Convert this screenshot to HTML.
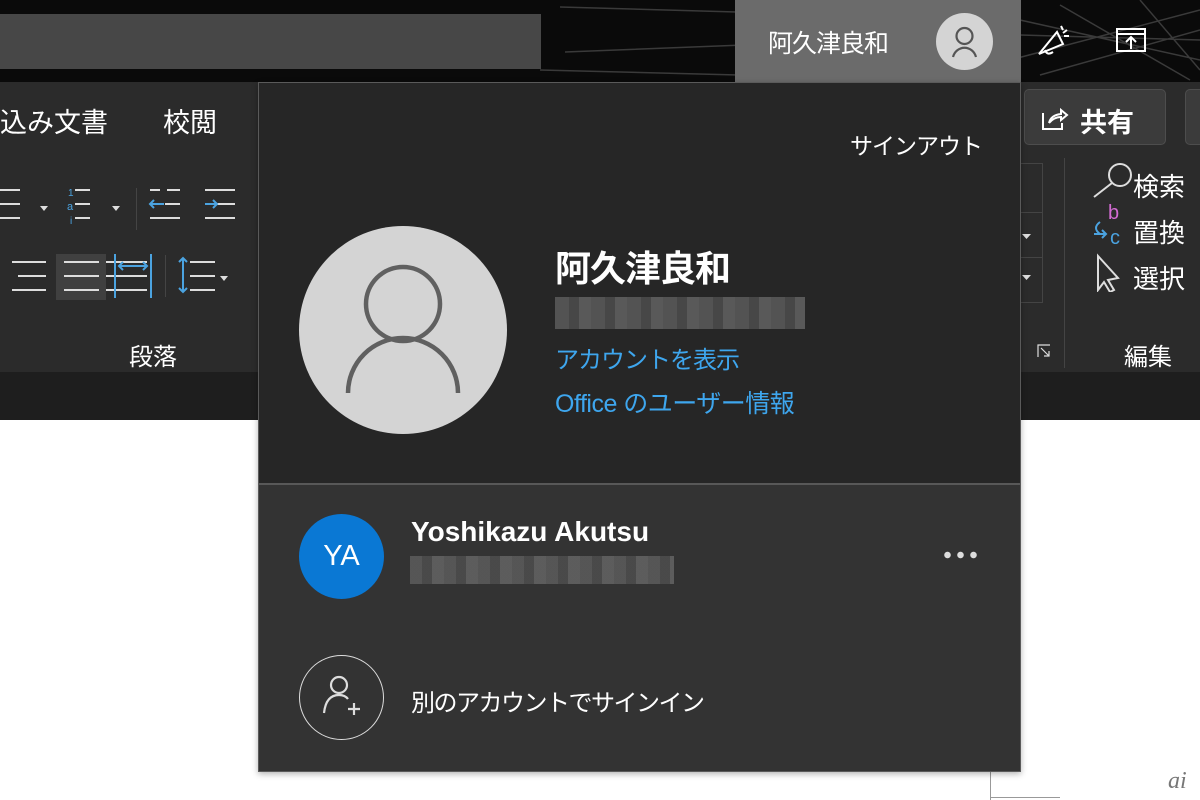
<!DOCTYPE html>
<html><head><meta charset="utf-8">
<style>
*{margin:0;padding:0;box-sizing:border-box}
body{width:1200px;height:800px;overflow:hidden;background:#fff;position:relative;font-family:"Liberation Sans","Noto Sans CJK JP",sans-serif;color:#fff}
.a{position:absolute}
.t{font-size:26px;white-space:nowrap}
</style></head><body>
<div class="a" style="left:0;top:0;width:1200px;height:82px;background:#0a0a0a"></div>
<svg class="a" style="left:540px;top:0" width="660" height="82"><g stroke="#3a3a3a" stroke-width="1.5" fill="none">
<path d="M20 7 L300 15 M25 52 L330 40 M0 70 L320 78 M480 20 L660 60 M470 60 L660 10 M480 35 L660 40 M500 75 L660 30 M520 5 L650 80 M600 0 L660 70"/></g></svg>
<div class="a" style="left:0;top:14px;width:541px;height:55px;background:#474747"></div>
<div class="a" style="left:735px;top:0;width:286px;height:82px;background:#6b6b6b"></div>
<div class="a t" style="left:768px;top:24px;font-size:25px;letter-spacing:-1px">阿久津良和</div>
<div class="a" style="left:936px;top:13px;width:57px;height:57px;border-radius:50%;background:#d4d4d4"></div>
<svg class="a" style="left:936px;top:13px" width="57" height="57"><g stroke="#555" stroke-width="2.2" fill="none"><circle cx="28.5" cy="23" r="8"/><path d="M17 44 A12 13 0 0 1 40 44"/></g></svg>
<svg class="a" style="left:1035px;top:22px" width="40" height="40"><g stroke="#fff" stroke-width="2" fill="none"><path d="M4 32 L22 10 L28 22 Z M10 28 q2 6 8 2 M26 4 l2 4 M32 8 l-4 3 M34 14 l-5 0"/></g></svg>
<svg class="a" style="left:1115px;top:27px" width="34" height="28"><g stroke="#fff" stroke-width="2" fill="none"><rect x="2" y="2" width="28" height="22"/><path d="M2 7 H30 M16 22 V11 M11 15 L16 10 L21 15"/></g></svg>
<!-- ribbon -->
<div class="a" style="left:0;top:82px;width:1200px;height:290px;background:#2b2b2b"></div>
<div class="a" style="left:0;top:372px;width:1200px;height:48px;background:#1e1e1e"></div>
<div class="a t" style="left:0;top:101px;font-size:27px">込み文書</div>
<div class="a t" style="left:163px;top:101px;font-size:27px">校閲</div>
<svg class="a" style="left:0;top:180px" width="250" height="130"><g stroke="#ddd" stroke-width="2" fill="none">
<path d="M0 10 H20 M0 24 H20 M0 38 H20 M75 10 H90 M75 24 H90 M75 38 H90 M150 10 H160 M167 10 H180 M165 24 H180 M150 38 H180 M205 10 H235 M215 24 H235 M205 38 H235"/>
<path d="M12 82 H46 M18 96 H46 M12 110 H46 M105 82 H147 M105 96 H147 M105 110 H147 M190 82 H215 M190 96 H215 M190 110 H215"/></g>
<rect x="56" y="74" width="50" height="46" fill="#404040"/>
<path d="M64 82 H99 M64 96 H99 M64 110 H99" stroke="#ddd" stroke-width="2"/>
<g stroke="#4ba3e0" stroke-width="2" fill="none"><path d="M150 24 H164 M154 20 L150 24 L154 28 M205 24 H217 M213 20 L217 24 L213 28 M115 74 V118 M151 74 V118 M119 86 H147 M123 82 L119 86 L123 90 M143 82 L147 86 L143 90 M183 78 V112 M179 82 L183 78 L187 82 M179 108 L183 112 L187 108"/></g>
<path d="M119 82 H147" stroke="#2b2b2b" stroke-width="0"/>
<path d="M40 26 h8 l-4 5z M112 26 h8 l-4 5z M220 96 h8 l-4 5z" fill="#ddd"/>
<text x="68" y="16" fill="#4ba3e0" font-size="10">1</text><text x="67" y="30" fill="#4ba3e0" font-size="11">a</text><text x="70" y="44" fill="#4ba3e0" font-size="10">i</text>
</svg>
<div class="a" style="left:136px;top:188px;width:1px;height:42px;background:#444"></div>
<div class="a" style="left:165px;top:255px;width:1px;height:42px;background:#444"></div>
<div class="a t" style="left:129px;top:337px;font-size:24px">段落</div>
<!-- right ribbon -->
<div class="a" style="left:1024px;top:89px;width:142px;height:56px;background:#3b3b3b;border:1px solid #4d4d4d;border-radius:5px"></div>
<svg class="a" style="left:1040px;top:105px" width="30" height="28"><g stroke="#fff" stroke-width="2" fill="none"><path d="M3 8 V24 H22 V18 M9 18 q2 -8 12 -9 V5 L27 10 L21 15 V12 q-7 0 -12 6"/></g></svg>
<div class="a t" style="left:1080px;top:101px;font-weight:bold;font-size:27px">共有</div>
<div class="a" style="left:1185px;top:89px;width:30px;height:56px;background:#3b3b3b;border:1px solid #4d4d4d;border-radius:5px"></div>
<div class="a" style="left:1020px;top:163px;width:23px;height:140px;border:1px solid #444;border-left:none"></div>
<div class="a" style="left:1020px;top:212px;width:23px;height:1px;background:#444"></div>
<div class="a" style="left:1020px;top:257px;width:23px;height:1px;background:#444"></div>
<svg class="a" style="left:1020px;top:225px" width="20" height="60"><path d="M2 9 h9 l-4.5 5z M2 50 h9 l-4.5 5z" fill="#ddd"/></svg>
<div class="a" style="left:1064px;top:158px;width:1px;height:210px;background:#444"></div>
<svg class="a" style="left:1036px;top:343px" width="20" height="20"><g stroke="#ddd" stroke-width="1.2" fill="none"><path d="M2 14 V2 H14 M5 5 L13 13 M8 13 H13 V8"/></g></svg>
<svg class="a" style="left:1090px;top:162px" width="42" height="130"><g stroke="#ddd" stroke-width="2" fill="none"><circle cx="30" cy="13" r="11"/><path d="M22 21 L4 35 M8 94 V128 L14 120 L20 130 L24 128 L18 118 L28 116 Z"/></g>
<g stroke="#4ba3e0" stroke-width="2" fill="none"><path d="M10 60 q-8 6 0 12 M4 72 H16 M12 68 L16 72 L12 76"/></g>
<text x="18" y="57" fill="#d36bd3" font-size="20">b</text><text x="20" y="82" fill="#4ba3e0" font-size="20">c</text></svg>
<div class="a t" style="left:1133px;top:167px">検索</div>
<div class="a t" style="left:1133px;top:213px">置換</div>
<div class="a t" style="left:1133px;top:259px">選択</div>
<div class="a t" style="left:1124px;top:337px;font-size:24px">編集</div>
<!-- doc outline -->
<div class="a" style="left:990px;top:770px;width:1px;height:30px;background:#999"></div>
<div class="a" style="left:990px;top:797px;width:70px;height:1px;background:#999"></div>
<div class="a" style="left:1168px;top:768px;font-family:'Liberation Serif',serif;font-style:italic;color:#777;font-size:24px">ai</div>
<!-- popup -->
<div class="a" style="left:258px;top:82px;width:763px;height:690px;background:#333;border:1px solid #5a5a5a;box-shadow:0 2px 6px rgba(0,0,0,.3)"></div>
<div class="a" style="left:259px;top:83px;width:761px;height:400px;background:#262626"></div>
<div class="a" style="left:259px;top:483px;width:761px;height:2px;background:#585858"></div>
<div class="a t" style="left:850px;top:127px;font-size:23px;letter-spacing:-1px">サインアウト</div>
<div class="a" style="left:299px;top:226px;width:208px;height:208px;border-radius:50%;background:#d4d4d4"></div>
<svg class="a" style="left:299px;top:226px" width="208" height="208"><g stroke="#606060" stroke-width="4.5" fill="none"><circle cx="104" cy="78" r="37"/><path d="M49 167 A55 55 0 0 1 159 167"/></g></svg>
<div class="a t" style="left:555px;top:240px;font-size:36px;font-weight:bold;letter-spacing:-1px">阿久津良和</div>
<div class="a" style="left:555px;top:297px;width:250px;height:32px;background:repeating-linear-gradient(90deg,#5e5e5e 0 14px,#4f4f4f 14px 24px,#666 24px 36px);opacity:.8"></div>
<div class="a t" style="left:555px;top:340px;color:#3ea6ee;font-size:24px;letter-spacing:-1px">アカウントを表示</div>
<div class="a t" style="left:555px;top:384px;color:#3ea6ee;font-size:25px;letter-spacing:-.5px">Office のユーザー情報</div>
<div class="a" style="left:299px;top:514px;width:85px;height:85px;border-radius:50%;background:#0a78d4;font-size:29px;text-align:center;line-height:85px">YA</div>
<div class="a t" style="left:411px;top:516px;font-weight:bold;font-size:28px">Yoshikazu Akutsu</div>
<div class="a" style="left:410px;top:556px;width:264px;height:28px;background:repeating-linear-gradient(90deg,#5e5e5e 0 12px,#4f4f4f 12px 22px,#676767 22px 34px);opacity:.8"></div>
<div class="a" style="left:941px;top:551px;width:40px;height:8px;background:radial-gradient(circle,#ddd 3px,transparent 3.5px) 0 0/13px 8px"></div>
<div class="a" style="left:299px;top:655px;width:85px;height:85px;border-radius:50%;border:1.5px solid #ddd"></div>
<svg class="a" style="left:299px;top:655px" width="85" height="85"><g stroke="#ddd" stroke-width="2.2" fill="none"><circle cx="40" cy="30" r="8"/><path d="M25 58 q2 -18 15 -18 q6 0 9 4 M55 48 v12 M49 54 h12"/></g></svg>
<div class="a t" style="left:411px;top:683px;font-size:24px;letter-spacing:-1.5px">別のアカウントでサインイン</div>
</body></html>
